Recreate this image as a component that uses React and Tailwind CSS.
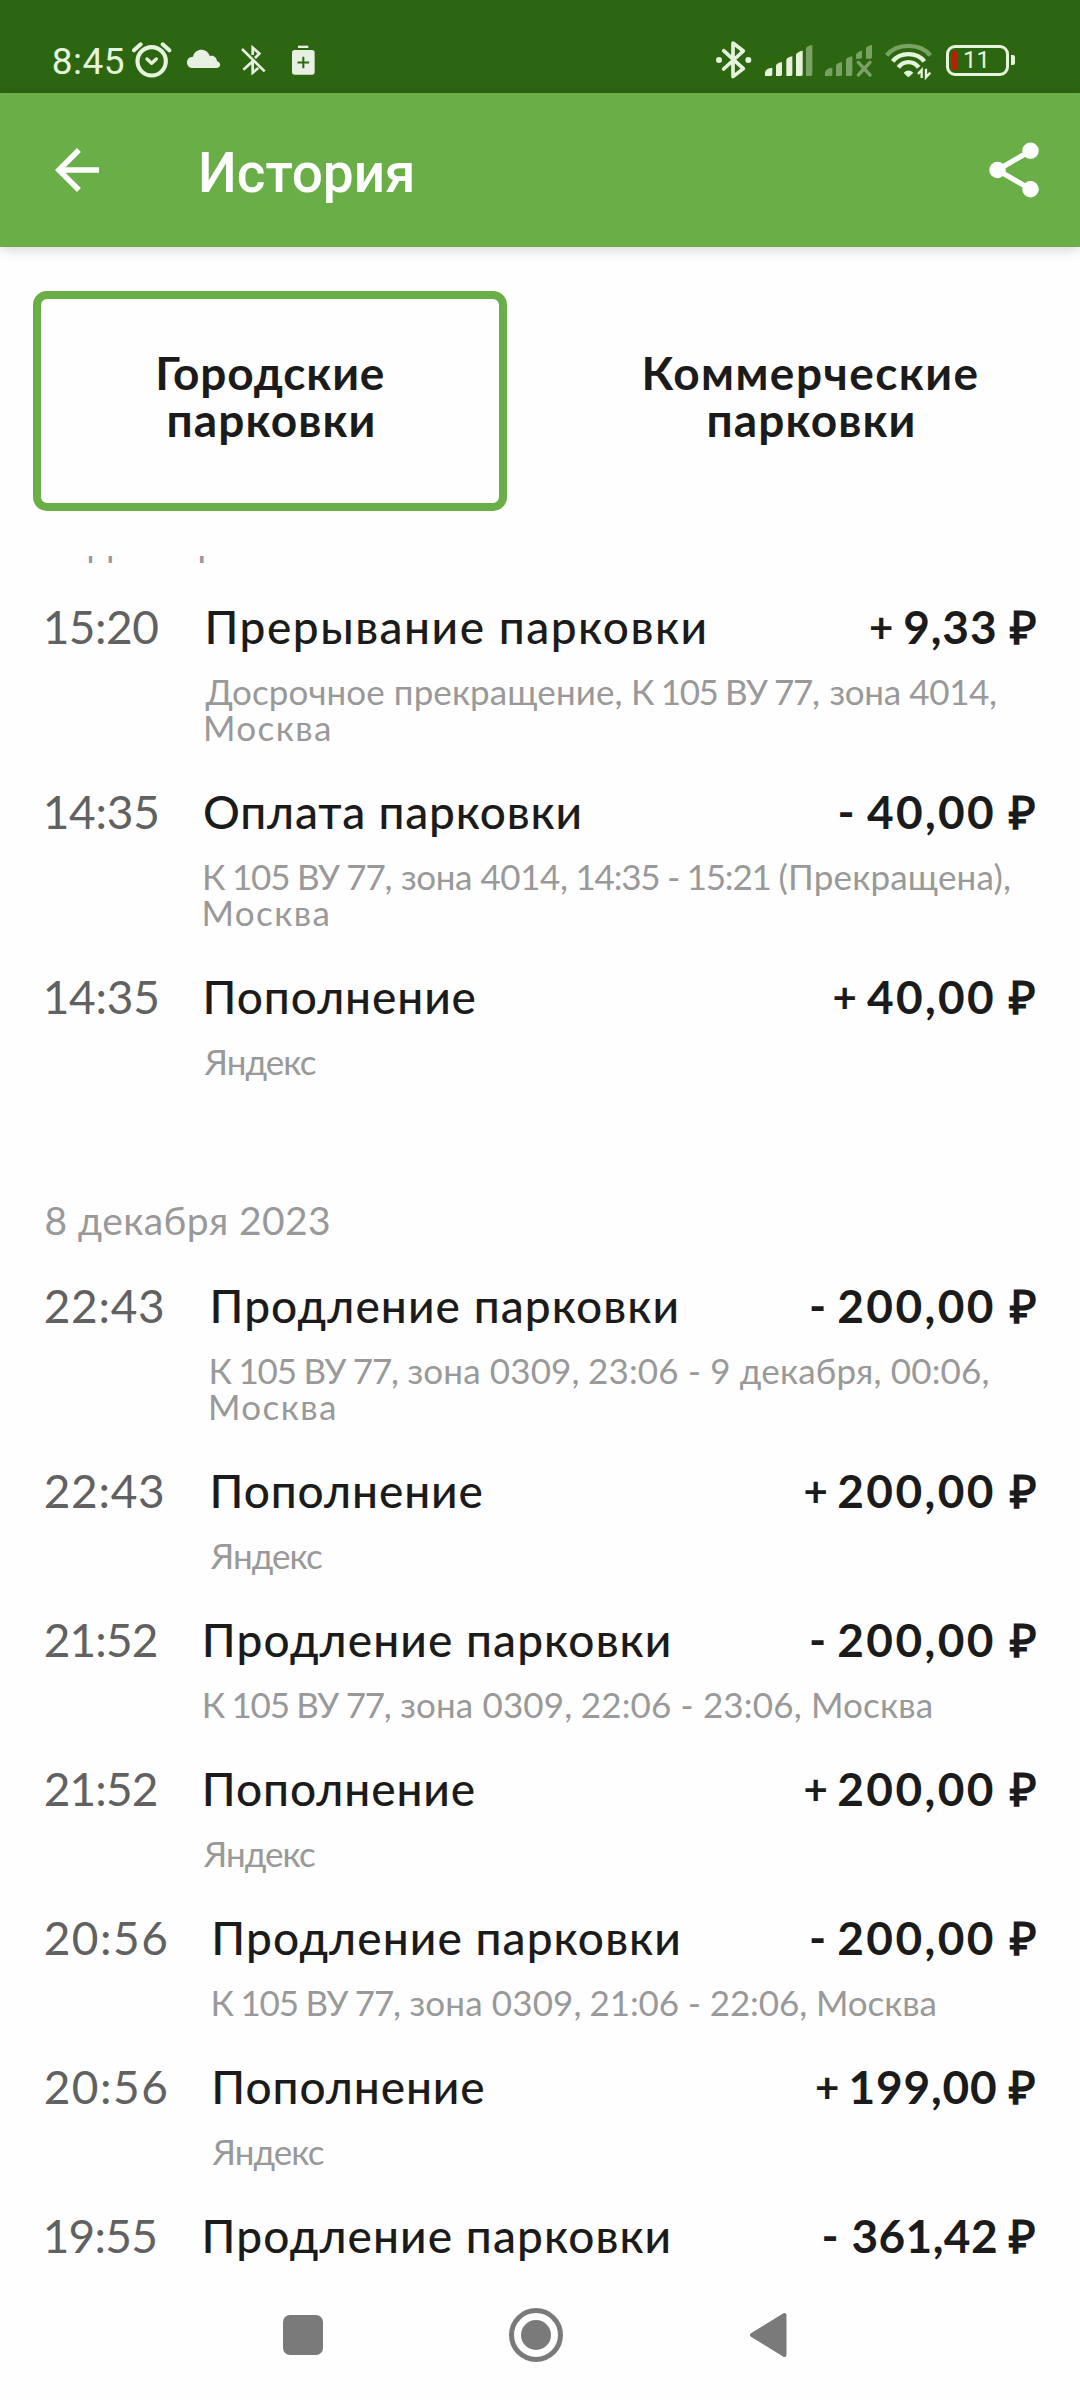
import React, { useLayoutEffect, useState } from "react";

let ctx;

// Measures the visible glyph extents and tracks the text so they span `w` pixels,
// starting `left` pixels into the line.
function Ink({ text, w, left = 0, size, weight = 400, family = "Lato" }) {
  const [fit, setFit] = useState({ ls: 0, ml: 0, box: w });
  useLayoutEffect(() => {
    ctx = ctx || document.createElement("canvas").getContext("2d");
    ctx.font = `${weight} ${size}px "${family}"`;
    const m = ctx.measureText(text);
    const before = m.actualBoundingBoxLeft;
    const ink = before + m.actualBoundingBoxRight;
    const ls = text.length > 1 ? (w - ink) / (text.length - 1) : 0;
    setFit({ ls, ml: left + before, box: w - before });
  }, [text, w, left, size, weight, family]);
  return (
    <span
      className="inline-block whitespace-pre"
      style={{ letterSpacing: `${fit.ls}px`, marginLeft: `${fit.ml}px`, width: `${fit.box}px` }}
    >
      {text}
    </span>
  );
}

const PLATE = "К 105 ВУ 77,";

const first = [
  {
    time: "15:20", tw: 112.5, col: "w-[160px]", title: "Прерывание парковки", nw: 496, nl: 4.5,
    sign: "+", amount: "9,33 ₽", aw: 165.5, vw: 131.3,
    lines: [
      [["Досрочное прекращение,", 416, 0.5], [PLATE, 185, 12.5], ["зона 4014,", 166.5, 10.5]],
      [["Москва", 124, 1]],
    ],
  },
  {
    time: "14:35", tw: 111.5, col: "w-[159px]", title: "Оплата парковки", nw: 374.5, nl: 2,
    sign: "-", amount: "40,00 ₽", aw: 196, vw: 168.5,
    lines: [
      [[PLATE, 186.5, 1], ["зона 4014,", 166, 9.5], ["14:35 - 15:21", 192, 10.5], ["(Прекращена),", 230.5, 10]],
      [["Москва", 124, 0.5]],
    ],
  },
  {
    time: "14:35", tw: 111.5, col: "w-[159px]", title: "Пополнение", nw: 268, nl: 3.6,
    sign: "+", amount: "40,00 ₽", aw: 202, vw: 168.5, lines: [[["Яндекс", 112, -0.3]]],
  },
];

const second = [
  {
    time: "22:43", tw: 117.3, col: "w-[166px]", title: "Продление парковки", nw: 463, nl: 3.5,
    sign: "-", amount: "200,00 ₽", aw: 224.5, vw: 197.3,
    lines: [
      [[PLATE, 186.5, 0.5], ["зона 0309,", 171, 9.5], ["23:06 - 9 декабря, 00:06,", 399.5, 10.5]],
      [["Москва", 124, 0]],
    ],
  },
  {
    time: "22:43", tw: 117.3, col: "w-[166px]", title: "Пополнение", nw: 268, nl: 3.5,
    sign: "+", amount: "200,00 ₽", aw: 231, vw: 197.3, lines: [[["Яндекс", 112, -1]]],
  },
  {
    time: "21:52", tw: 111, col: "w-[159px]", title: "Продление парковки", nw: 463, nl: 2.8,
    sign: "-", amount: "200,00 ₽", aw: 224.5, vw: 197.3,
    lines: [[[PLATE, 186, 0.7], ["зона 0309,", 171, 9.5], ["22:06 - 23:06, Москва", 350, 10.5]]],
  },
  {
    time: "21:52", tw: 111, col: "w-[159px]", title: "Пополнение", nw: 268, nl: 2.8,
    sign: "+", amount: "200,00 ₽", aw: 231, vw: 197.3, lines: [[["Яндекс", 112, -1]]],
  },
  {
    time: "20:56", tw: 120.5, col: "w-[168px]", title: "Продление парковки", nw: 463, nl: 3.3,
    sign: "-", amount: "200,00 ₽", aw: 224.5, vw: 197.3,
    lines: [[[PLATE, 186.5, 0.5], ["зона 0309,", 171, 9.5], ["21:06 - 22:06, Москва", 345, 10]]],
  },
  {
    time: "20:56", tw: 120.5, col: "w-[168px]", title: "Пополнение", nw: 268, nl: 3.3,
    sign: "+", amount: "199,00 ₽", aw: 219.5, vw: 184, lines: [[["Яндекс", 112, -1.3]]],
  },
  {
    time: "19:55", tw: 109.5, col: "w-[158px]", title: "Продление парковки", nw: 463, nl: 3.6,
    sign: "-", amount: "361,42 ₽", aw: 212, vw: 183, lines: [],
  },
];

function Row({ r }) {
  const signWidth = r.sign === "+" ? 20.5 : 12.5;
  return (
    <div className="mb-[39px] flex pl-[44px] pr-[44.5px]">
      <div className={`${r.col} shrink-0 text-[46px] leading-[56px] text-[#616161]`}>
        <Ink text={r.time} w={r.tw} left={1.7} size={46} />
      </div>
      <div className="min-w-0 grow">
        <div className="flex h-[56px] justify-between text-[46px] leading-[56px] text-[#1b1b1b]">
          <div className="font-medium">
            <Ink text={r.title} w={r.nw} left={r.nl} size={46} weight={500} />
          </div>
          <div className="flex font-bold">
            <div className={r.sign === "+" ? "text-[42px]" : "text-[46px]"}>
              <Ink text={r.sign} w={signWidth} size={r.sign === "+" ? 42 : 46} weight={700} />
            </div>
            <Ink text={r.amount} w={r.vw} left={r.aw - signWidth - r.vw} size={46} weight={700} />
          </div>
        </div>
        <div className="mt-[18px] pl-px text-[35px] leading-[36px] text-[#999999]">
          {r.lines.map((line, i) => (
            <div key={i} className="flex h-[36px] whitespace-nowrap">
              {line.map(([t, w, l], j) => (
                <Ink key={j} text={t} w={w} left={l} size={35} />
              ))}
            </div>
          ))}
        </div>
      </div>
    </div>
  );
}

function DateLabel({ parts }) {
  return (
    <div className="mb-[35px] flex h-[46px] pl-[44px] text-[39px] leading-[46px] text-[#999999]">
      {parts.map(([text, w, left]) => (
        <Ink key={text} text={text} w={w} left={left} size={39} />
      ))}
    </div>
  );
}

function StatusBar() {
  const on = "#e6f4de";
  const off = "#7ba265";
  return (
    <div className="flex h-[93px] bg-[#2d6610] pt-[30px]">
      <div className="w-[131px] pl-[52px] font-[Roboto] text-[37px] leading-[64px] text-[#e6f4de]">
        <Ink text="8:45" w={70} left={1.8} size={37} family="Roboto" />
      </div>
      <svg className="h-[60px] w-[41px]" viewBox="273 0 123 180" fill="none" stroke={on} strokeLinecap="round">
        <circle cx="335" cy="94" r="42.5" strokeWidth="12.5" />
        <path d="M321 87l14 13 14-13" strokeWidth="10" strokeLinejoin="round" />
        <path d="M282 61l20-18M368 43l20 18" strokeWidth="12" />
      </svg>
      <svg className="ml-[14px] h-[60px] w-[36px]" viewBox="437 0 108 180" fill="#e8efe5">
        <path d="M455 114C434 113 435 80 458 80c5-27 43-28 50-2 14-3 21 6 22 16 14 4 12 20-3 20z" />
      </svg>
      <svg className="ml-[18px] h-[60px] w-[28px]" viewBox="599 0 84 180" fill="none" stroke="#e8efe5" strokeWidth="8">
        <path d="M605 57l68 67M637 75V53l20 18-13 13M609 119l29-26M637 96v32l17-14" />
      </svg>
      <svg className="ml-[22px] h-[60px] w-[28px]" viewBox="749 0 84 180">
        <rect x="773" y="47" width="31" height="7" fill="#e8efe5" />
        <rect x="755" y="60" width="68" height="74" rx="8" fill="#e8efe5" />
        <path d="M789 80v35M771.5 97.5h35" stroke="#2d6610" strokeWidth="6" />
      </svg>
      <div className="grow" />
      <svg className="h-[60px] w-[40px]" viewBox="25 0 120 180" fill="none" stroke={on} strokeWidth="11" strokeLinecap="round" strokeLinejoin="round">
        <path d="M54 62l59 54-31 24V39l31 24-59 54" />
        <circle cx="40" cy="90" r="5" fill={on} strokeWidth="8" />
        <circle cx="128" cy="90" r="5" fill={on} strokeWidth="8" />
      </svg>
      <svg className="ml-[10px] h-[60px] w-[50px]" viewBox="175 0 150 180" fill={on}>
        <path d="M178 138v-10q2-14 22-15v20q0 5-5 5z" />
        <path d="M211 138v-32q3-7 18-10v37q0 5-5 5z" />
        <path d="M242 138V89q4-8 18-10v54q0 5-5 5z" />
        <path d="M271 138V73q4-8 20-11v71q0 5-5 5z" />
        <path d="M301 138V55q4-8 19-10v88q0 5-5 5z" fill={off} />
      </svg>
      <svg className="ml-[10px] h-[60px] w-[50px]" viewBox="355 0 150 180" fill={off}>
        <path d="M358 138v-10q2-14 22-15v20q0 5-5 5z" />
        <path d="M391 138v-32q3-7 18-10v37q0 5-5 5z" />
        <path d="M421 138V89q4-8 19-10v54q0 5-5 5z" />
        <path d="M451 86V73q4-8 18-11v20q0 4-5 4z" />
        <path d="M481 86V55q4-8 18-10v36q0 5-5 5z" />
        <path d="M458 97l35 38M493 97l-35 38" stroke={off} strokeWidth="10" strokeLinecap="round" fill="none" />
      </svg>
      <svg className="ml-[10px] h-[60px] w-[50px]" viewBox="535 0 150 180" fill="none" stroke={on} strokeWidth="13">
        <path d="M543 76C574 38 643 38 674 76" stroke={off} />
        <path d="M561 94C584 65 633 65 656 94" />
        <path d="M578 112C594 91 623 91 639 112" />
        <path d="M594 128q14-13 29 0l-11 11q-4 4-8 0z" fill={on} stroke="none" />
        <path d="M648 144v-24l-11 12M661 116v26l13-14" strokeWidth="7" />
      </svg>
      <div className="ml-[12px] mt-[14px] mr-[65px] flex h-[32px] items-center">
        <div className="flex h-[31px] w-[63px] items-center rounded-[9px] border-[3px] border-[#e6f4de] pl-[3px]">
          <div className="h-[19px] w-[6px] rounded-[2px] bg-[#b82000]" />
          <div className="pl-[7px] font-[Roboto] text-[24px] leading-[25px] text-[#e6f4de]">
            <Ink text="11" w={20.5} size={24} family="Roboto" />
          </div>
        </div>
        <div className="ml-[2px] h-[10px] w-[4px] rounded-r-[2px] bg-[#e6f4de]" />
      </div>
    </div>
  );
}

export default function App() {
  return (
    <div className="flex h-[2400px] w-[1080px] flex-col overflow-hidden bg-[#fefefe] font-[Lato,sans-serif]">
      <StatusBar />
      <div className="flex h-[154px] items-center bg-[#6aae47] shadow-[0_2px_12px_rgba(0,0,0,0.18)]">
        <svg className="ml-[44px] h-[66px] w-[66px]" viewBox="0 0 24 24" fill="#fff">
          <path d="M20 11H7.83l5.59-5.59L12 4l-8 8 8 8 1.41-1.41L7.83 13H20v-2z" />
        </svg>
        <div className="mt-[6px] ml-[91px] grow font-[Roboto] text-[55px] leading-[64px] font-medium text-white">
          <Ink text="История" w={211} size={55} weight={500} family="Roboto" />
        </div>
        <svg className="mr-[33px] h-[66px] w-[66px]" viewBox="0 0 24 24" fill="#fff" stroke="#fff">
          <path d="M18 5L6 12l12 7" fill="none" strokeWidth="1.9" />
          <circle cx="18" cy="5" r="3" stroke="none" />
          <circle cx="6" cy="12" r="3" stroke="none" />
          <circle cx="18" cy="19" r="3" stroke="none" />
        </svg>
      </div>
      <div className="mt-[44px] flex justify-between px-[33px] text-[46px] leading-[47px] font-bold text-[#1b1b1b]">
        <div className="flex h-[220px] w-[474px] flex-col items-center rounded-[14px] border-8 border-[#6aae47] pt-[49.5px] pl-[2px]">
          <Ink text="Городские" w={225.5} size={46} weight={700} />
          <Ink text="парковки" w={205} size={46} weight={700} />
        </div>
        <div className="flex h-[220px] w-[474px] flex-col items-center pt-[57.5px] pl-[2px]">
          <Ink text="Коммерческие" w={333} size={46} weight={700} />
          <Ink text="парковки" w={205} size={46} weight={700} />
        </div>
      </div>
      <div className="mt-[45px] h-[1714px] overflow-hidden">
        <div className="-mt-[38.5px]">
          <DateLabel parts={[["11", 31, 2], ["декабря 2023", 251, 11.5]]} />
          {first.map((r, i) => <Row key={i} r={r} />)}
          <div className="h-[79px]" />
          <DateLabel parts={[["8", 20, 1.5], ["декабря 2023", 251, 12.5]]} />
          {second.map((r, i) => <Row key={i} r={r} />)}
        </div>
      </div>
      <div className="flex h-[130px] items-center justify-between px-[283px]">
        <div className="h-[40px] w-[40px] rounded-[7px] bg-[#7a7a7a]" />
        <div className="flex h-[54px] w-[54px] items-center justify-center rounded-full border-[5px] border-[#7a7a7a]">
          <div className="h-[30px] w-[30px] shrink-0 rounded-full bg-[#7a7a7a]" />
        </div>
        <svg className="mr-[10px] h-[46px] w-[38px]" viewBox="0 0 38 46">
          <path d="M3 23L35.5 3v40z" fill="#7a7a7a" stroke="#7a7a7a" strokeWidth="4" strokeLinejoin="round" />
        </svg>
      </div>
    </div>
  );
}
